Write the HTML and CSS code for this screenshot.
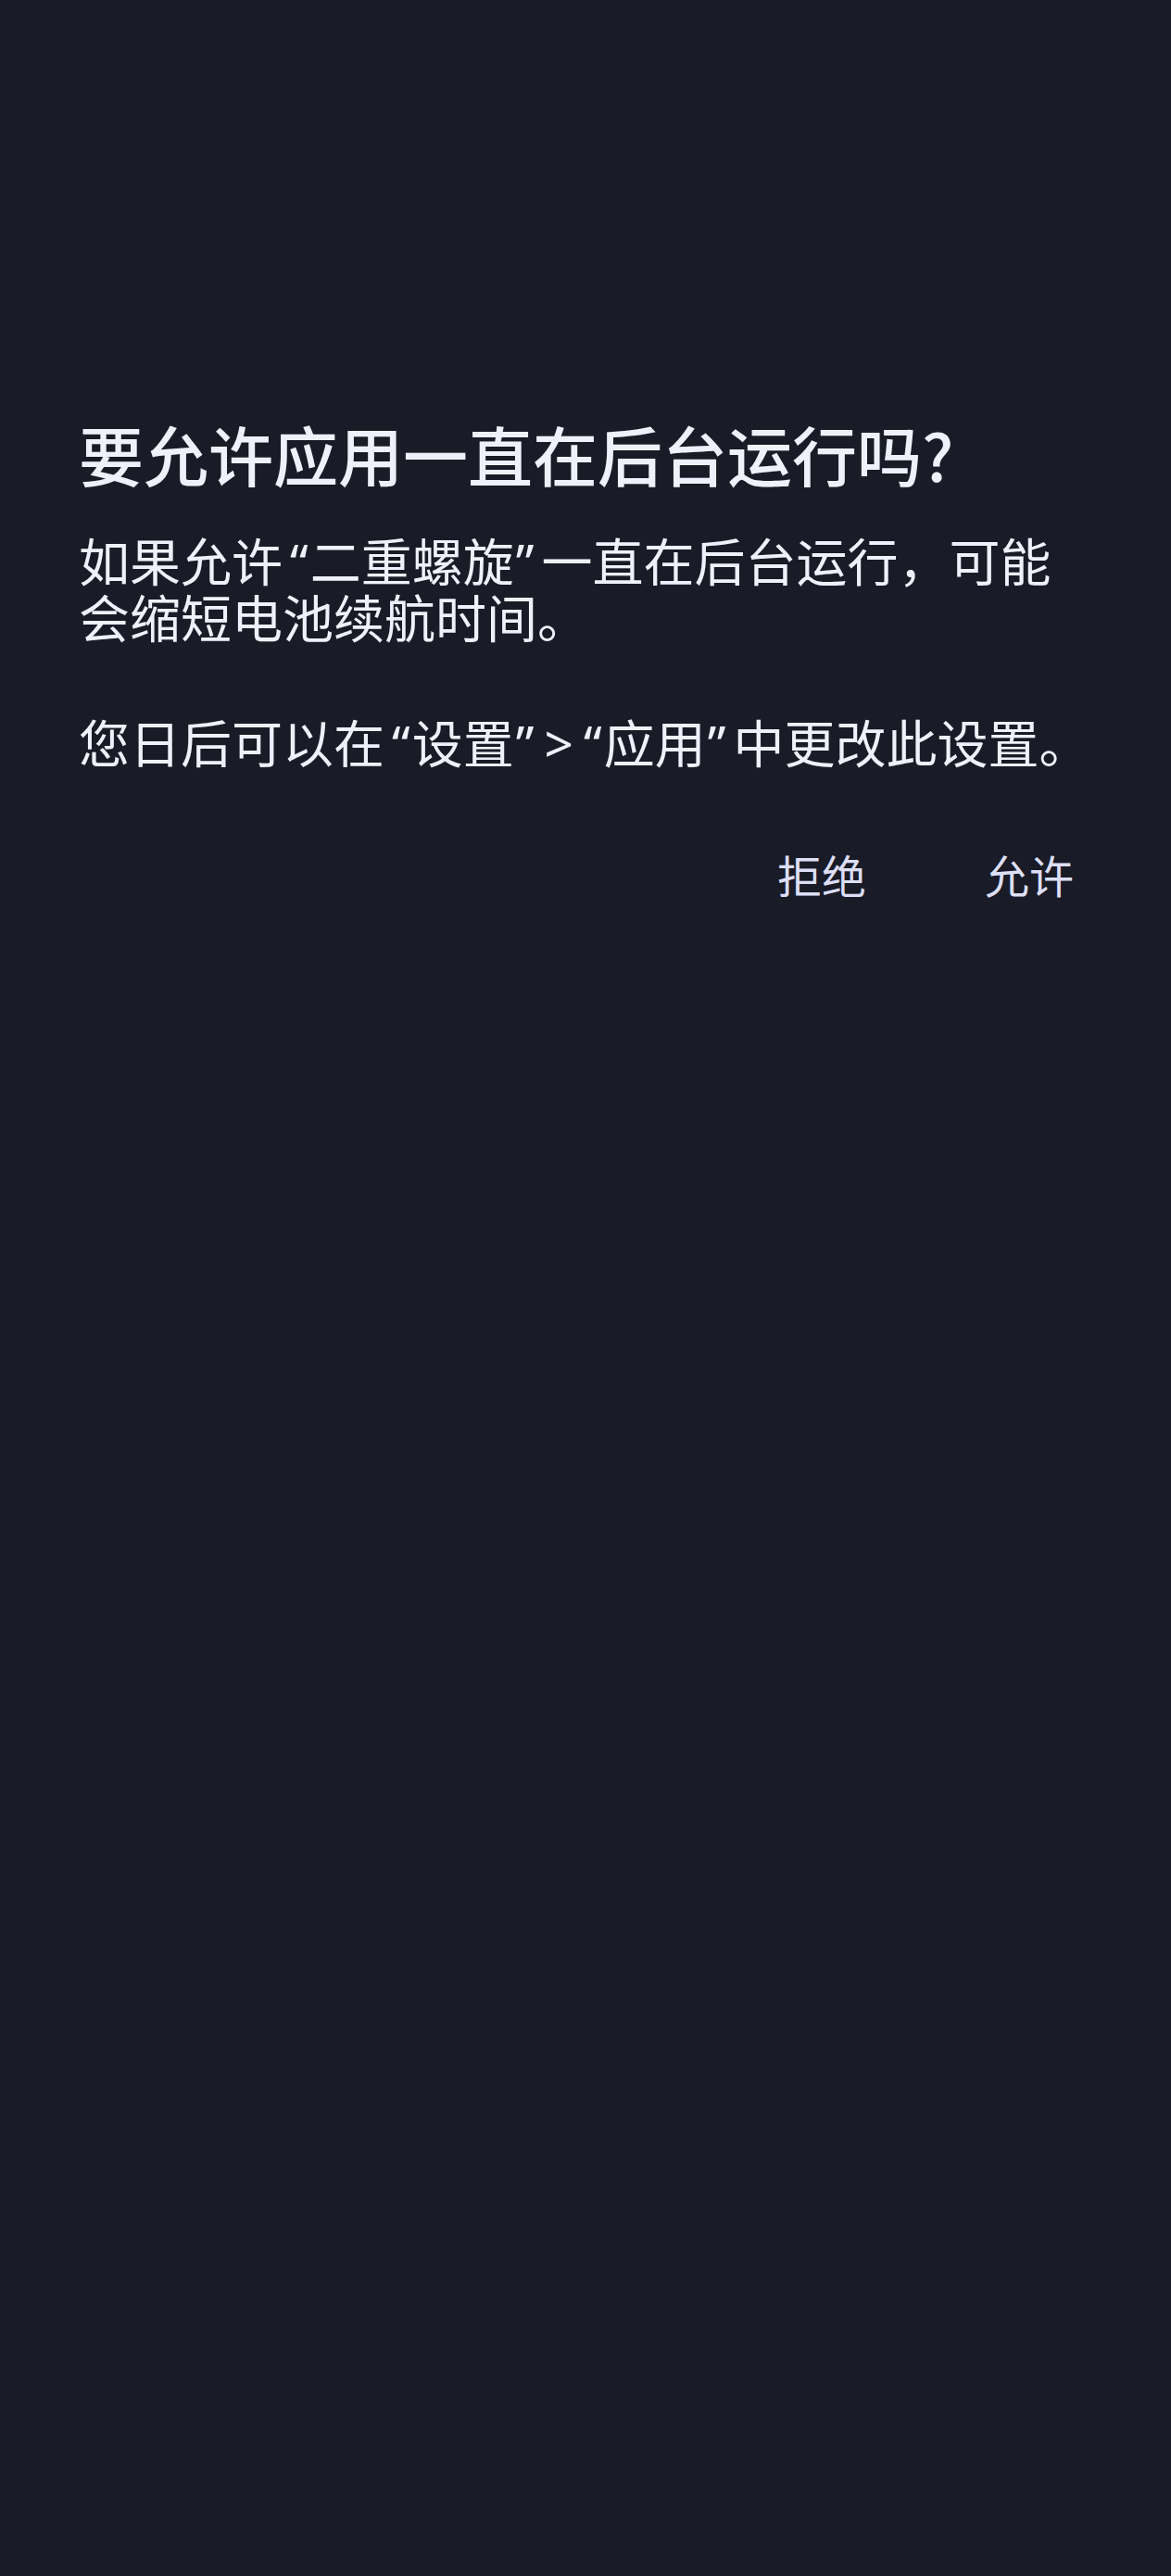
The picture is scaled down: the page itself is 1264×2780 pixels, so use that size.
FILE: index.html
```html
<!DOCTYPE html>
<html lang="zh-CN">
<head>
    <meta charset="UTF-8">
    <meta name="viewport" content="width=device-width, initial-scale=1.0">
    <title>后台运行权限</title>
    <link rel="stylesheet" href="styles.css">
</head>
<body>

<div class="dialog">
    <h1 class="dialog-title">要允许应用一直在后台运行吗?</h1>
    <p class="dialog-text">如果允许<span class="q-open">“</span>二重螺旋<span class="q-close">”</span>一直在后台运行，可能会缩短电池续航时间。</p>
    <p class="dialog-text dialog-note">您日后可以在<span class="q-open">“</span>设置<span class="q-close">”</span><span class="gt">&gt;</span><span class="q-open">“</span>应用<span class="q-close">”</span>中更改此设置。</p>
    <div class="dialog-actions">
        <button type="button" class="dialog-btn">拒绝</button>
        <button type="button" class="dialog-btn">允许</button>
    </div>
</div>

</body>
</html>
```

FILE: styles.css
```css
body {
    font-family: "Noto Sans CJK SC", "Noto Sans", sans-serif;
    background-color: #191b26;
    color: #eff0fa;
    margin: 0;
    padding: 0;
    height: 2780px;
}
.dialog {
    padding: 448px 85px 0 85px;
}
.dialog-title {
    font-size: 70px;
    font-weight: 500;
    line-height: 84px;
    margin: 0;
}
.dialog-text {
    font-size: 55px;
    line-height: 61px;
    margin: 41px 0 0 0;
}
.dialog-note {
    margin-top: 74px;
}
/* 引号用窄的西文字形 */
.q-open, .q-close, .gt {
    font-family: "Noto Sans", sans-serif;
    line-height: 1;
}
.q-open {
    padding: 0 2px 0 8px;
}
.q-close {
    padding: 0 8px 0 2px;
}
.gt {
    padding: 0 3px;
}
.dialog-actions {
    display: flex;
    justify-content: flex-end;
    gap: 88px;
    margin-top: 84px;
}
.dialog-btn {
    font-family: inherit;
    font-size: 48px;
    line-height: 58px;
    color: #dcdff6;
    background: none;
    border: none;
    padding: 0 20px;
    cursor: pointer;
}
```
